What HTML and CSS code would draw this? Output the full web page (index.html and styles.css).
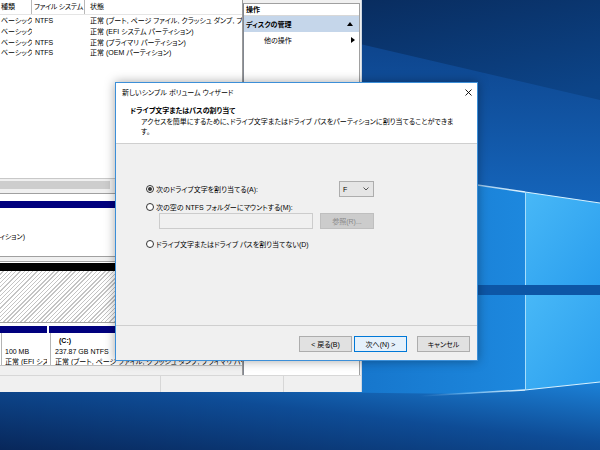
FILE: index.html
```html
<!DOCTYPE html>
<html lang="ja">
<head>
<meta charset="utf-8">
<title>新しいシンプル ボリューム ウィザード</title>
<link rel="stylesheet" href="styles.css">
</head>
<body>
<div class="screen">
  <svg class="wallpaper" width="600" height="450" viewBox="0 0 600 450" aria-hidden="true">
    <defs>
      <linearGradient id="g-sky" x1="0" y1="0" x2="0.3" y2="1">
        <stop offset="0" stop-color="#071f48"/>
        <stop offset="0.45" stop-color="#0c4488"/>
        <stop offset="1" stop-color="#0d4c98"/>
      </linearGradient>
      <linearGradient id="g-ray" x1="0" y1="0" x2="0" y2="1">
        <stop offset="0" stop-color="#0d4289"/>
        <stop offset="1" stop-color="#1565bb"/>
      </linearGradient>
      <linearGradient id="g-wall" x1="0" y1="0" x2="1" y2="0">
        <stop offset="0" stop-color="#1470c6"/>
        <stop offset="1" stop-color="#1d88de"/>
      </linearGradient>
      <linearGradient id="g-pane" x1="0" y1="0" x2="1" y2="1">
        <stop offset="0" stop-color="#48b8f7"/>
        <stop offset="1" stop-color="#2a9eee"/>
      </linearGradient>
      <linearGradient id="g-floor" x1="0" y1="1" x2="1" y2="0">
        <stop offset="0" stop-color="#08275a"/>
        <stop offset="0.55" stop-color="#0e4c96"/>
        <stop offset="1" stop-color="#1c82d8"/>
      </linearGradient>
      <linearGradient id="g-beam" gradientUnits="userSpaceOnUse" x1="360" y1="0" x2="525" y2="0">
        <stop offset="0" stop-color="#8fd0ff" stop-opacity="0"/>
        <stop offset="1" stop-color="#e4f6ff" stop-opacity="1"/>
      </linearGradient>
      <linearGradient id="g-beam2" gradientUnits="userSpaceOnUse" x1="420" y1="0" x2="525" y2="0">
        <stop offset="0" stop-color="#8fd0ff" stop-opacity="0"/>
        <stop offset="1" stop-color="#e4f6ff" stop-opacity="1"/>
      </linearGradient>
    </defs>
    <rect width="600" height="450" fill="url(#g-sky)"/>
    <polygon points="300,30 600,100 600,203 480,186 300,150" fill="url(#g-ray)"/>
    <polygon points="300,160 480,186 525,192 525,285 300,285" fill="url(#g-wall)"/>
    <rect x="300" y="285" width="300" height="10" fill="#0d56a6"/>
    <polygon points="300,295 525,295 525,390 470,394 300,398" fill="url(#g-wall)"/>
    <polygon points="0,392 300,392 470,394 525,390 600,382 600,450 0,450" fill="url(#g-floor)"/>
    <polygon points="525,192 600,203 600,285 525,285" fill="url(#g-pane)"/>
    <polygon points="525,295 600,295 600,382 525,390" fill="url(#g-pane)"/>
    <line x1="360" y1="168" x2="525" y2="192" stroke="url(#g-beam)" stroke-width="1.5"/>
    <line x1="525" y1="192" x2="600" y2="203" stroke="#d8f2ff" stroke-width="1.2"/>
    <line x1="420" y1="396" x2="525" y2="390" stroke="url(#g-beam2)" stroke-width="1.5"/>
    <line x1="525" y1="390" x2="600" y2="382" stroke="#d8f2ff" stroke-width="1.2"/>
    <line x1="525.5" y1="192" x2="525.5" y2="285" stroke="#a6defc" stroke-width="1"/>
    <line x1="525.5" y1="295" x2="525.5" y2="390" stroke="#a6defc" stroke-width="1"/>
  </svg>

  <div class="mmc">
    <div class="mmc-main">
      <div class="left-pane">
        <div class="listview">
          <div class="lv-head">
            <div class="c c1">種類</div>
            <div class="c c2">ファイル システム</div>
            <div class="c c3">状態</div>
          </div>
          <div class="lv-rows">
            <div class="lv-row"><div class="c c1">ベーシック</div><div class="c c2">NTFS</div><div class="c c3">正常 (ブート, ページ ファイル, クラッシュ ダンプ, プライマリ パーティション)</div></div>
            <div class="lv-row"><div class="c c1">ベーシック</div><div class="c c2"></div><div class="c c3">正常 (EFI システム パーティション)</div></div>
            <div class="lv-row"><div class="c c1">ベーシック</div><div class="c c2">NTFS</div><div class="c c3">正常 (プライマリ パーティション)</div></div>
            <div class="lv-row"><div class="c c1">ベーシック</div><div class="c c2">NTFS</div><div class="c c3">正常 (OEM パーティション)</div></div>
          </div>
        </div>
        <div class="hscroll"><div class="thumb"></div></div>
        <div class="vsplit"></div>
        <div class="diskmap">
          <div class="disk disk1">
            <div class="bar navy"></div>
            <div class="d1-body"><div class="tail">正常 (プライマリ パーティション)</div></div>
          </div>
          <div class="disk-gap"></div>
          <div class="disk disk2">
            <div class="bar black"></div>
            <div class="hatch"></div>
          </div>
          <div class="disk disk3">
            <div class="part p1">
              <div class="bar navy"></div>
              <div class="pbody">
                <div class="pl">&nbsp;</div>
                <div class="pl">100 MB</div>
                <div class="pl">正常 (EFI システム パーティション)</div>
              </div>
            </div>
            <div class="part p2">
              <div class="bar navy"></div>
              <div class="pbody">
                <div class="pl name">(C:)</div>
                <div class="pl">237.87 GB NTFS</div>
                <div class="pl">正常 (ブート, ページ ファイル, クラッシュ ダンプ, プライマリ パーティション)</div>
              </div>
            </div>
          </div>
        </div>
      </div>
      <div class="action-pane">
        <div class="ap-box">
          <div class="ap-head">操作</div>
          <div class="ap-row sel"><span>ディスクの管理</span>
            <svg class="tri" width="6" height="4" viewBox="0 0 6 4"><polygon points="0,4 3,0 6,4" fill="#000"/></svg>
          </div>
          <div class="ap-row sub"><span>他の操作</span>
            <svg class="tri" width="4" height="6" viewBox="0 0 4 6"><polygon points="0,0 4,3 0,6" fill="#000"/></svg>
          </div>
        </div>
      </div>
    </div>
    <div class="statusbar">
      <div class="sb s1"></div>
      <div class="sb s2"></div>
      <div class="sb s3"></div>
    </div>
  </div>

  <div class="dialog">
    <div class="dlg-title">
      <span>新しいシンプル ボリューム ウィザード</span>
      <svg class="close" width="7" height="7" viewBox="0 0 7 7"><path d="M0.5 0.5 L6.5 6.5 M6.5 0.5 L0.5 6.5" stroke="#000" stroke-width="0.9"/></svg>
    </div>
    <div class="dlg-head">
      <div class="h-title">ドライブ文字またはパスの割り当て</div>
      <div class="h-desc">アクセスを簡単にするために、ドライブ文字またはドライブ パスをパーティションに割り当てることができま<br>す。</div>
    </div>
    <div class="dlg-body">
      <div class="opt row1">
        <div class="radio"><span class="rb on"></span><span>次のドライブ文字を割り当てる(A):</span></div>
        <div class="combo"><span>F</span>
          <svg width="6" height="4" viewBox="0 0 6 4"><polyline points="0.5,0.5 3,3 5.5,0.5" fill="none" stroke="#444" stroke-width="0.9"/></svg>
        </div>
      </div>
      <div class="opt row2">
        <div class="radio"><span class="rb"></span><span>次の空の NTFS フォルダーにマウントする(M):</span></div>
      </div>
      <div class="opt row3">
        <div class="textbox"></div>
        <div class="btn disabled">参照(R)...</div>
      </div>
      <div class="opt row4">
        <div class="radio"><span class="rb"></span><span>ドライブ文字またはドライブ パスを割り当てない(D)</span></div>
      </div>
    </div>
    <div class="dlg-foot">
      <div class="btn back">&lt; 戻る(B)</div>
      <div class="btn focus">次へ(N) &gt;</div>
      <div class="btn cancel">キャンセル</div>
    </div>
  </div>
</div>
</body>
</html>
```

FILE: styles.css
```css
* { box-sizing: border-box; margin: 0; padding: 0; }
html, body { width: 600px; height: 450px; overflow: hidden; }
body {
  font-family: "Liberation Sans", "Noto Sans CJK JP", sans-serif;
  font-size: 7px;
  font-feature-settings: "palt";
  color: #000;
  background: #0b3f80;
}
.screen { position: relative; width: 600px; height: 450px; overflow: hidden; }
.wallpaper { position: absolute; left: 0; top: 0; }

/* Disk management window */
.mmc {
  position: absolute; left: 0; top: 0;
  width: 362px; height: 392px;
  display: flex; flex-direction: column;
  background: #f0f0f0;
  border-right: 1px solid #cfd8e3;
  overflow: hidden;
}
.mmc-main { display: flex; height: 375px; }
.left-pane {
  width: 243px; display: flex; flex-direction: column;
  background: #f0f0f0; border-right: 1px solid #9a9a9a;
}
.listview { height: 179px; background: #fff; border-bottom: 1px solid #c8c8c8; overflow: hidden; }
.lv-head { display: flex; height: 15px; border-bottom: 1px solid #e5e5e5; }
.lv-head .c { height: 14px; line-height: 14px; }
.lv-head .c1, .lv-head .c2 { border-right: 1px solid #b8b8b8; }
.lv-head .c2 { letter-spacing: -0.3px; padding-left: 2px; }
.lv-rows { padding-top: 1px; }
.lv-row { display: flex; height: 10.7px; align-items: center; }
.c { white-space: nowrap; overflow: hidden; line-height: 10px; }
.c1 { width: 32px; padding-left: 1px; flex: none; }
.c2 { width: 53px; padding-left: 3px; flex: none; }
.c3 { flex: 1; padding-left: 5px; }

.hscroll { height: 12px; background: #f0f0f0; padding-top: 2px; }
.hscroll .thumb { width: 110px; height: 8px; background: #cdcdcd; }
.vsplit { height: 3px; border-bottom: 1px solid #a0a0a0; background: #f0f0f0; }

.diskmap { flex: 1; background: #f0f0f0; display: flex; flex-direction: column; overflow: hidden; }
.bar { height: 7px; }
.bar.navy { background: #00007e; }
.bar.black { background: #000; height: 8px; }
.disk1 { height: 63px; background: #fff; padding-top: 7px; border-bottom: 1px solid #a0a0a0; }
.d1-body { padding-top: 24px; }
.tail { width: 25px; display: flex; justify-content: flex-end; white-space: nowrap; line-height: 10.5px; }
.disk-gap { height: 4px; }
.disk2 { height: 62px; background: #fff; border-top: 1px solid #a0a0a0; border-bottom: 1px solid #a0a0a0; padding-top: 1px; }
.hatch {
  height: 51px;
  background: repeating-linear-gradient(135deg, #ffffff 0 2px, #c4c4c4 2px 3px);
}
.disk3 { height: 43px; background: #fff; padding-top: 3px; display: flex; border-bottom: 1px solid #c0c0c0; }
.part { display: flex; flex-direction: column; }
.p1 { width: 47px; }
.p2 { flex: 1; margin-left: 2px; }
.pbody {
  flex: 1; margin-left: 1px; border-left: 1px solid #b4b4b4;
  padding: 3px 0 0 3px; overflow: hidden; background: #fff;
}
.p2 .pbody { padding-left: 4px; }
.pl { line-height: 10.5px; white-space: nowrap; }
.pl.name { padding-left: 4px; font-weight: bold; }

/* action pane */
.action-pane { flex: 1; padding: 3px 1px 0 0; background: #f0f0f0; display: flex; }
.ap-box { flex: 1; background: #fff; border-top: 1px solid #a0a0a0; border-left: 1px solid #828790; border-right: 1px solid #a0a0a0; }
.ap-head { height: 12px; line-height: 11px; padding-left: 2px; font-weight: bold; border-bottom: 1px solid #d8d8d8; }
.ap-row { display: flex; align-items: center; justify-content: space-between; height: 16px; padding: 0 6px 0 2px; }
.ap-row.sel { background: #c5d6ea; font-weight: bold; }
.ap-row.sub { padding-left: 20px; padding-right: 4px; }
.tri { display: block; }

.statusbar { height: 17px; display: flex; border-top: 1px solid #d7d7d7; background: #f0f0f0; }
.sb { height: 100%; }
.s1 { width: 161px; border-right: 1px solid #d7d7d7; }
.s2 { width: 123px; border-right: 1px solid #d7d7d7; }
.s3 { flex: 1; }

/* wizard dialog */
.dialog {
  position: absolute; left: 115px; top: 82px;
  width: 363px; height: 279px;
  border: 1px solid #3c8fd8;
  background: #fff;
  box-shadow: 0 0 10px rgba(0, 0, 0, 0.35);
  display: flex; flex-direction: column;
}
.dlg-title {
  height: 18px; display: flex; align-items: center; justify-content: space-between;
  padding: 0 5px 0 6px;
}
.close { display: block; }
.dlg-head { height: 43px; padding-top: 5px; border-bottom: 1px solid #cfcfcf; }
.h-title { font-weight: bold; line-height: 10px; padding-left: 14px; }
.h-desc { line-height: 10px; padding-left: 25px; padding-top: 1px; }
.dlg-body {
  flex: 1; background: #f0f0f0;
  padding: 37px 103px 0 30px;
  display: flex; flex-direction: column;
}
.opt { display: flex; align-items: center; }
.row1 { height: 16px; }
.row2 { height: 12px; margin-top: 4px; }
.row3 { height: 16px; }
.row4 { height: 12px; margin-top: 9px; }
.radio { display: flex; align-items: center; white-space: nowrap; }
.rb {
  width: 8px; height: 8px; border-radius: 50%;
  border: 1px solid #333; background: #fff; margin-right: 2px;
  display: flex; align-items: center; justify-content: center;
}
.rb.on::after { content: ""; width: 4px; height: 4px; border-radius: 50%; background: #333; }
.combo {
  margin-left: auto; width: 35px; height: 16px;
  background: #e5e5e5; border: 1px solid #adadad;
  display: flex; align-items: center; justify-content: space-between;
  padding: 0 4px 0 3px;
}
.combo svg { display: block; }
.textbox { margin-left: 13px; width: 154px; height: 16px; background: #f0f0f0; border: 1px solid #cccccc; }
.btn {
  height: 16px; width: 53px;
  display: flex; align-items: center; justify-content: center;
  background: #e1e1e1; border: 1px solid #adadad; white-space: nowrap;
}
.btn.disabled { margin-left: 7px; width: 54px; background: #cccccc; border-color: #bfbfbf; color: #8a8a8a; }
.dlg-foot {
  height: 35px; background: #f0f0f0; border-top: 1px solid #cfcfcf;
  display: flex; justify-content: flex-end; align-items: flex-start;
  padding: 10px 7px 0 0;
}
.btn.focus { margin-left: 2px; background: #e5f1fb; border-color: #0078d7; }
.btn.cancel { margin-left: 10px; }
```
